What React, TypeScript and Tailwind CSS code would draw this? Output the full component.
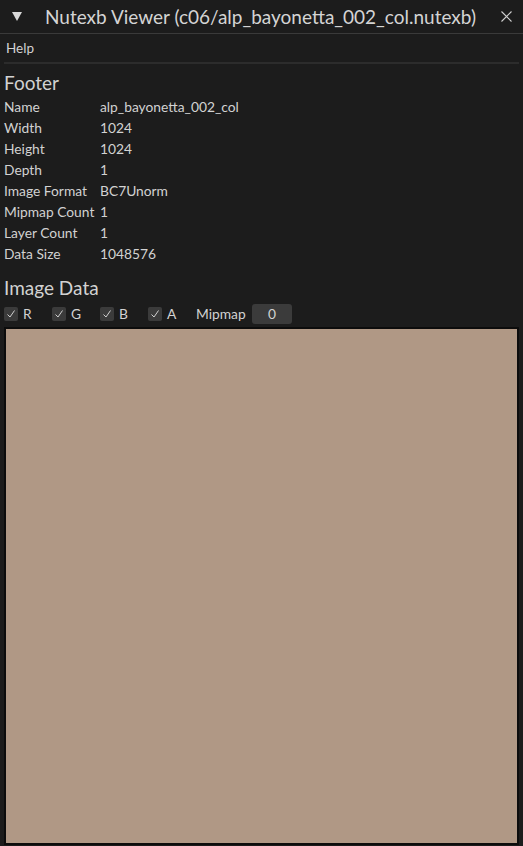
import React from 'react';

const rows: [string, string][] = [
  ['Name', 'alp_bayonetta_002_col'],
  ['Width', '1024'],
  ['Height', '1024'],
  ['Depth', '1'],
  ['Image Format', 'BC7Unorm'],
  ['Mipmap Count', '1'],
  ['Layer Count', '1'],
  ['Data Size', '1048576'],
];

function Check({ label }: { label: string }) {
  return (
    <div className="flex items-center gap-[5px] w-[48px]">
      <div className="w-[14px] h-[14px] rounded-[2px] bg-[#3b3b3b] flex items-center justify-center">
        <svg width="10" height="10" viewBox="0 0 10 10">
          <path d="M1.5 5.5 L4 8 L8.5 1.5" fill="none" stroke="#cfcfcf" strokeWidth="1" />
        </svg>
      </div>
      <span>{label}</span>
    </div>
  );
}

export default function App() {
  return (
    <div
      className="w-[523px] h-[846px] bg-[#1c1c1c] text-[#d2d2d2] flex flex-col overflow-hidden"
      style={{ fontFamily: 'Lato, "Noto Sans", sans-serif' }}
    >
      <div className="h-[34px] flex items-center border-b border-[#3a3a3a] shrink-0">
        <svg className="ml-[12px]" width="10" height="9" viewBox="0 0 10 9">
          <path d="M0 0 H10 L5 9 Z" fill="#d8d8d8" />
        </svg>
        <span className="ml-[23px] text-[19px] leading-none text-[#d4d4d4]">
          Nutexb Viewer (c06/alp_bayonetta_002_col.nutexb)
        </span>
        <svg className="ml-auto mr-[11px]" width="11" height="11" viewBox="0 0 11 11">
          <path d="M0.5 0.5 L10.5 10.5 M10.5 0.5 L0.5 10.5" stroke="#d0d0d0" strokeWidth="1.1" />
        </svg>
      </div>
      <div className="h-[28px] flex items-center px-[6px] text-[13.5px] shrink-0">Help</div>
      <div className="mx-[4px] h-[2px] bg-[#2c2c2c] shrink-0" />
      <div className="px-[4px] flex flex-col flex-1 min-h-0">
        <div className="text-[19px] h-[28px] flex items-center mt-[5px]">Footer</div>
        <div className="flex flex-col text-[13.8px]">
          {rows.map(([k, v]) => (
            <div key={k} className="flex h-[21px] items-center">
              <span className="w-[96px]">{k}</span>
              <span>{v}</span>
            </div>
          ))}
        </div>
        <div className="text-[19px] h-[28px] flex items-center mt-[9px]">Image Data</div>
        <div className="flex items-center text-[13.8px] h-[22px] mt-[1px]">
          <Check label="R" />
          <Check label="G" />
          <Check label="B" />
          <Check label="A" />
          <span className="w-[56px]">Mipmap</span>
          <div className="w-[40px] h-[20px] rounded-[3px] bg-[#3b3b3b] flex items-center justify-center">
            0
          </div>
        </div>
        <div className="mt-[2px] mb-[1px] flex-1 border-2 border-[#0c0c0c] bg-[#b09885]" />
      </div>
    </div>
  );
}
